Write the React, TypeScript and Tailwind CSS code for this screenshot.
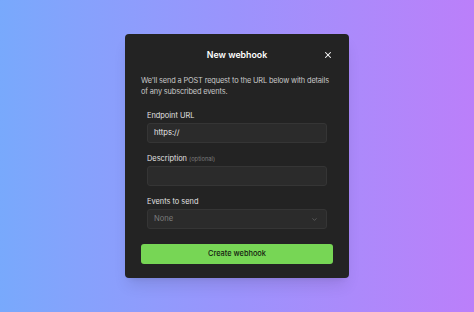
import { X, ChevronDown } from "lucide-react";

export default function App() {
  return (
    <main
      className="flex h-[312px] w-full items-center justify-center bg-linear-to-r from-[#78a9fc] via-[#9b93fc] to-[#bb7ffa]"
      style={{ fontFamily: "Inter, 'Noto Sans', sans-serif" }}
    >
      <div className="w-[224px] rounded-[4px] bg-[#232323] px-4 pt-[14px] pb-[14px] shadow-lg">
        <div className="relative flex items-center justify-center">
          <h2 className="text-[8.8px] leading-[14px] font-semibold text-white">New webhook</h2>
          <button className="absolute right-0 text-white">
            <X className="h-[10px] w-[10px]" strokeWidth={2.5} />
          </button>
        </div>

        <p className="mt-[13px] text-[7.4px] leading-[11px] tracking-[-0.15px] text-[#c9c9c9]">
          We'll send a POST request to the URL below with details of any subscribed events.
        </p>

        <div className="mt-[13px] px-[6px]">
          <label className="block text-[7.4px] leading-[11px] text-[#e2e2e2]">Endpoint URL</label>
          <div className="mt-[2px] flex h-[20px] items-center rounded-[3px] border border-[#353535] bg-[#2b2b2b] px-[6px] text-[7.6px] text-[#e8e8e8]">
            https://
          </div>

          <label className="mt-[10px] block text-[7.4px] leading-[11px] text-[#e2e2e2]">
            Description <span className="text-[5.8px] text-[#7b7b7b]">(optional)</span>
          </label>
          <div className="mt-[2px] h-[20px] rounded-[3px] border border-[#353535] bg-[#2b2b2b]" />

          <label className="mt-[10px] block text-[7.4px] leading-[11px] text-[#e2e2e2]">Events to send</label>
          <div className="mt-[2px] flex h-[20px] items-center justify-between rounded-[3px] border border-[#353535] bg-[#2b2b2b] px-[6px] text-[7.6px] text-[#7c7c7c]">
            <span>None</span>
            <ChevronDown className="mr-[2px] h-[7px] w-[7px] text-[#777]" strokeWidth={2} />
          </div>
        </div>

        <button className="mt-[15px] flex h-[20px] w-full items-center justify-center rounded-[3px] bg-[#77d655] text-[7.4px] font-medium text-[#142010]">
          Create webhook
        </button>
      </div>
    </main>
  );
}
